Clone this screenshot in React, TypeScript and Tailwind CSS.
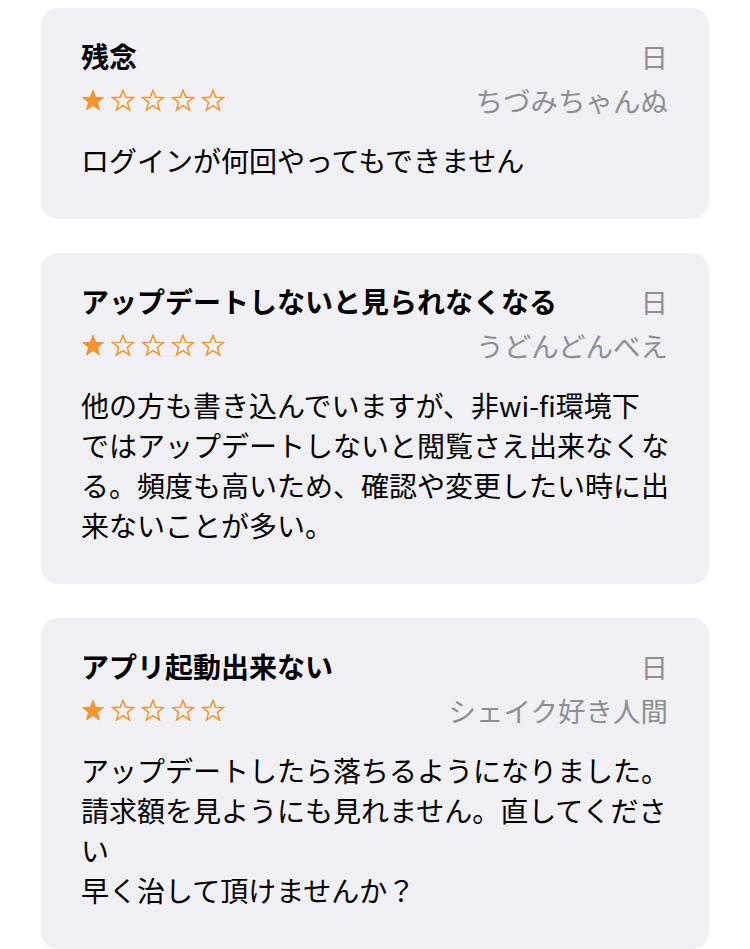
import React from "react";

const font = {
  fontFamily: '"Noto Sans CJK JP", "Noto Sans", sans-serif',
};

function Star({ filled }: { filled: boolean }) {
  return (
    <svg width="24" height="23" viewBox="0 0 24 23" className="shrink-0">
      <path
        d="M12 1.2 L14.7 8.3 L22.4 8.6 L16.4 13.4 L18.5 20.9 L12 16.6 L5.5 20.9 L7.6 13.4 L1.6 8.6 L9.3 8.3 Z"
        fill={filled ? "#f7942f" : "none"}
        stroke="#f7942f"
        strokeWidth={filled ? 1 : 1.5}
        strokeLinejoin="miter"
      />
    </svg>
  );
}

function Card({
  title,
  author,
  lines,
}: {
  title: string;
  author: string;
  lines: string[];
}) {
  return (
    <div className="mx-[41px] rounded-[17px] bg-[#f0f0f5] pl-[40px] pr-[41px] pt-[31px] pb-[39px]">
      <div className="flex items-center justify-between h-[34px]">
        <div className="text-[28px] font-bold text-black leading-[34px] whitespace-nowrap">
          {title}
        </div>
        <div className="text-[27.5px] text-[#8e8e93] leading-[34px]">日</div>
      </div>
      <div className="flex items-center justify-between h-[34px] mt-[10px]">
        <div className="flex gap-[6px]">
          <Star filled />
          <Star filled={false} />
          <Star filled={false} />
          <Star filled={false} />
          <Star filled={false} />
        </div>
        <div className="text-[27.5px] text-[#8e8e93] leading-[34px] whitespace-nowrap">
          {author}
        </div>
      </div>
      <div className="mt-[23px] text-[28px] text-black leading-[40px]">
        {lines.map((l, i) => (
          <div key={i} className="whitespace-nowrap">
            {l}
          </div>
        ))}
      </div>
    </div>
  );
}

export default function App() {
  return (
    <div className="w-[750px] h-[949px] bg-white overflow-hidden pt-[8px] flex flex-col gap-[34px]" style={font}>
      <Card
        title="残念"
        author="ちづみちゃんぬ"
        lines={["ログインが何回やってもできません"]}
      />
      <Card
        title="アップデートしないと見られなくなる"
        author="うどんどんべえ"
        lines={[
          "他の方も書き込んでいますが、非wi-fi環境下",
          "ではアップデートしないと閲覧さえ出来なくな",
          "る。頻度も高いため、確認や変更したい時に出",
          "来ないことが多い。",
        ]}
      />
      <Card
        title="アプリ起動出来ない"
        author="シェイク好き人間"
        lines={[
          "アップデートしたら落ちるようになりました。",
          "請求額を見ようにも見れません。直してくださ",
          "い",
          "早く治して頂けませんか？",
        ]}
      />
    </div>
  );
}
